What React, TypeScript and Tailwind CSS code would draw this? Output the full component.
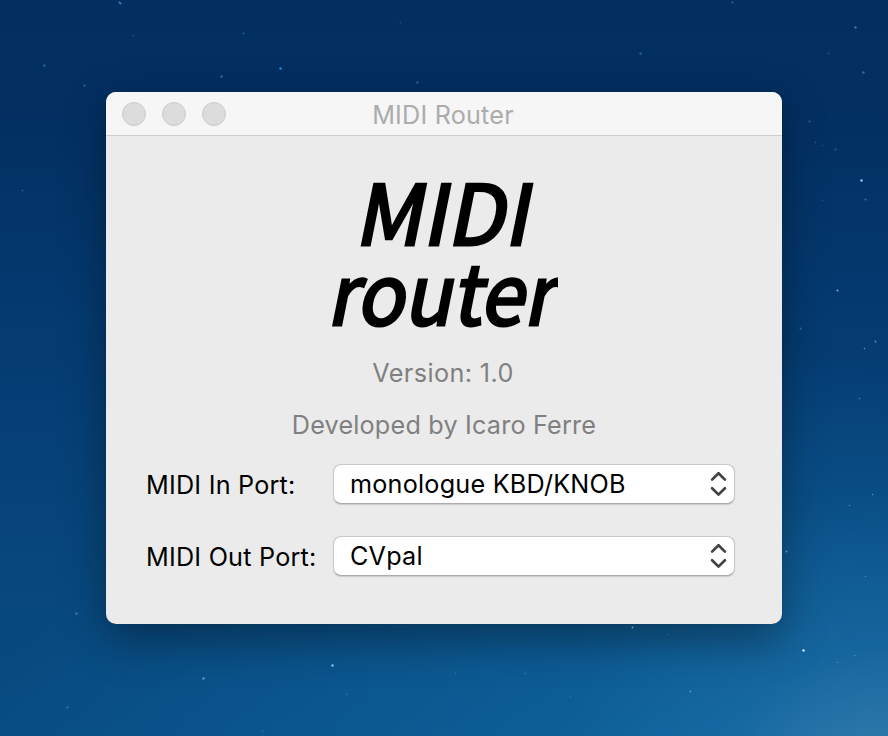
const STARS: [number, number, number, string, number][] = [
  [119, 2, 1, "#4c9be0", 0.7], [120, 3, 1, "#4c9be0", 0.8], [243, 33, 1, "#3487ad", 0.6], [280, 68, 1.2, "#3598e8", 0.85],
  [221, 76, 1.2, "#3287c8", 0.7], [44, 65, 1.2, "#3b7faa", 0.7], [84, 85, 1.2, "#3482b8", 0.6],
  [400, 22, 1, "#2d70a0", 0.5], [417, 82, 1.2, "#3487c0", 0.6], [133, 35, 1.2, "#25638c", 0.5],
  [530, 102, 1, "#3c8bc0", 0.6], [640, 53, 1.2, "#2f8bb0", 0.6], [732, 2, 1, "#3f85b5", 0.7],
  [855, 27, 1.2, "#5a9bb0", 0.7], [863, 72, 1.2, "#3e8bc0", 0.7], [828, 53, 1.2, "#28659a", 0.5],
  [809, 121, 1.2, "#286a9a", 0.6], [815, 142, 1, "#286a9a", 0.7], [822, 145, 0.8, "#286a9a", 0.7],
  [835, 149, 1, "#3478a5", 0.7], [861, 180, 1.2, "#8fd4ff", 1], [865, 199, 1, "#7a7fb8", 0.7],
  [822, 200, 0.8, "#3478a5", 0.6], [837, 290, 1, "#9fbdd0", 0.9], [800, 328, 0.9, "#3d91cf", 0.7],
  [875, 341, 1, "#6c9bd0", 0.8], [864, 348, 0.8, "#8fb4a9", 0.8], [859, 398, 0.8, "#63a4d0", 0.7],
  [872, 494, 0.8, "#7bb4d8", 0.7], [849, 505, 0.8, "#63a4d0", 0.6], [786, 551, 1, "#8dbedc", 0.8],
  [865, 576, 0.8, "#68a9cb", 0.6], [22, 190, 1, "#3982aa", 0.6], [76, 613, 1.2, "#5692b3", 0.7],
  [203, 678, 1.2, "#80acc8", 0.8], [332, 665, 1.3, "#75caff", 1], [67, 707, 1.1, "#2f91b5", 0.8],
  [346, 694, 1, "#278bc0", 0.6], [262, 731, 1, "#278bb0", 0.6], [632, 627, 1, "#a5d3e9", 0.9],
  [667, 634, 0.8, "#639bb5", 0.6], [803, 650, 1.2, "#e0efff", 1], [837, 662, 0.8, "#8390b8", 0.7],
  [854, 655, 0.8, "#69add0", 0.6], [690, 691, 0.9, "#51b5e5", 0.8], [525, 673, 0.9, "#318fb9", 0.7],
  [455, 673, 0.9, "#318fb9", 0.6], [570, 696, 0.8, "#318fb9", 0.6],
];

function Chevrons() {
  return (
    <svg width="17" height="26" viewBox="0 0 17 26" fill="none" stroke="#424242" strokeWidth="2.7" strokeLinecap="round" strokeLinejoin="round">
      <path d="M2.1 8.6 8.5 2.3l6.4 6.3M2.1 17.3l6.4 6.3 6.4-6.3" />
    </svg>
  );
}

function PortRow({ label, value }: { label: string; value: string }) {
  return (
    <div className="flex h-10 items-center">
      <span className="w-[187px] shrink-0 whitespace-nowrap pt-[2px] text-[25.2px] leading-[38px] tracking-[0.22px]">{label}</span>
      <button className="flex h-10 w-[402px] shrink-0 items-center justify-between rounded-[8px] border border-[#c9c9c9] border-b-[#ababab] bg-white bg-clip-padding pl-4 pr-[7px] shadow-[0_1px_1px_rgba(0,0,0,0.14)]">
        <span className="whitespace-nowrap text-[25.2px] leading-[38px] tracking-[0.22px]">{value}</span>
        <Chevrons />
      </button>
    </div>
  );
}

export default function App() {
  return (
    <main className="relative flex h-[736px] w-[888px] overflow-hidden bg-[radial-gradient(ellipse_330px_300px_at_100%_108%,rgba(72,137,180,0.75),rgba(40,120,175,0.3)_50%,transparent),radial-gradient(ellipse_800px_420px_at_88%_105%,rgba(18,112,172,0.7),transparent),linear-gradient(180deg,#032e60_0%,#032f61_15%,#043a70_42%,#07457b_72%,#084d83_100%)] pl-[106px] pt-[92px] font-['Inter',sans-serif]">
      <svg className="absolute inset-0" width="888" height="736">
        {STARS.map(([x, y, r, c, o]) => (
          <circle key={`${x}-${y}`} cx={x + 0.5} cy={y + 0.5} r={r} fill={c} opacity={o} />
        ))}
      </svg>
      <section className="relative flex h-[532px] w-[676px] flex-col rounded-[10px] bg-[#ebebeb] shadow-[0_0_1px_rgba(0,0,0,0.45),0_16px_44px_rgba(0,0,0,0.36)]">
        <header className="grid h-11 shrink-0 grid-cols-[1fr_auto_1fr] items-center rounded-t-[10px] border-b border-[#cecece] bg-[#f6f6f6] px-4">
          <div className="flex gap-4">
            <span className="size-6 rounded-full border border-[#cbcbcb] bg-[#dcdcdc]" />
            <span className="size-6 rounded-full border border-[#cbcbcb] bg-[#dcdcdc]" />
            <span className="size-6 rounded-full border border-[#cbcbcb] bg-[#dcdcdc]" />
          </div>
          <h1 className="pr-[2px] pt-[2px] text-[25.2px] leading-8 tracking-[0.2px] text-[#acacac]">MIDI Router</h1>
        </header>
        <div className="flex flex-col items-center">
          <svg className="mt-[4px] overflow-visible" width="280" height="210" viewBox="304 140 280 210" fontFamily="'Noto Sans CJK SC', sans-serif" fontWeight="400" stroke="#000" strokeWidth="3" strokeLinejoin="miter">
            <defs>
              <clipPath id="logo-edge">
                <rect x="304" y="140" width="254" height="210" />
              </clipPath>
            </defs>
            <text transform="translate(354 245) skewX(-11.3)" fontSize="83" textLength="174" lengthAdjust="spacingAndGlyphs">MIDI</text>
            <g clipPath="url(#logo-edge)">
              <text transform="translate(326.5 325) skewX(-11.3)" fontSize="83" textLength="227" lengthAdjust="spacingAndGlyphs">router</text>
            </g>
          </svg>
          <p className="mt-[7px] pr-[2px] text-[25.2px] leading-8 tracking-[0.4px] text-[#808080]">Version: 1.0</p>
          <p className="mt-5 text-[25.2px] leading-8 tracking-[0.2px] text-[#808080]">Developed by Icaro Ferre</p>
        </div>
        <div className="mt-[23px] flex flex-col gap-8 pl-10 text-black">
          <PortRow label="MIDI In Port:" value="monologue KBD/KNOB" />
          <PortRow label="MIDI Out Port:" value="CVpal" />
        </div>
      </section>
    </main>
  );
}
